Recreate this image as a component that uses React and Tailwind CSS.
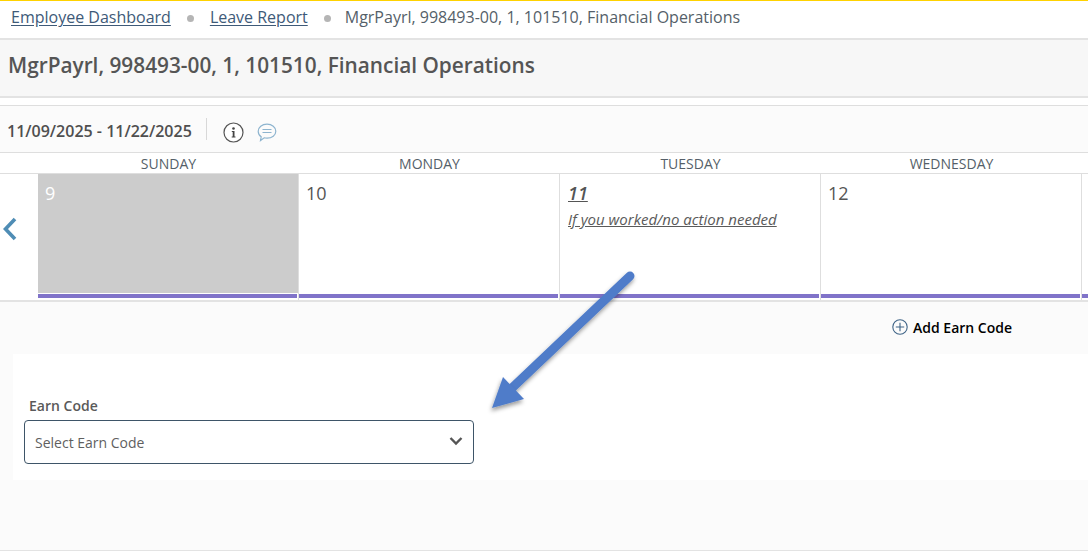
import React from "react";

function Cell({ num, gray, children, italic }) {
  return (
    <div className={`w-[261px] shrink-0 flex flex-col border-r border-[#dedede] ${gray ? "" : "bg-white"}`}>
      <div className={`flex-1 pl-[7px] pt-[7px] ${gray ? "bg-[#cccccc] text-white" : "text-[#555555]"}`}>
        {italic ? (
          <div className="text-[18px] leading-[25px] font-semibold italic underline pl-px">{num}</div>
        ) : (
          <div className="text-[18px] leading-[25px]">{num}</div>
        )}
        {children}
      </div>
      <div className="h-px bg-white" />
      <div className="h-[4px] bg-[#8073c9] mr-px" />
      <div className="h-[2px] bg-white" />
    </div>
  );
}

export default function App() {
  return (
    <div className="relative w-[1088px] h-[557px] overflow-hidden bg-white text-[#555555]" style={{ fontFamily: '"Open Sans", sans-serif' }}>
      <div className="h-px bg-[#ffd200]" />
      <div className="h-[37px] flex items-center pl-[11px] text-[16px] text-[#4b5a69] pb-[5px]">
        <a className="underline underline-offset-2 text-[#3e5a78]">Employee Dashboard</a>
        <span className="w-[7px] h-[7px] rounded-full bg-[#b5b5b5] ml-4 mr-[16px] mt-[2px]" />
        <a className="underline underline-offset-2 text-[#3e5a78]">Leave Report</a>
        <span className="w-[7px] h-[7px] rounded-full bg-[#b5b5b5] ml-4 mr-[14px] mt-[2px]" />
        <span className="text-[#555f69]">MgrPayrl, 998493-00, 1, 101510, Financial Operations</span>
      </div>
      <div className="h-[60px] bg-[#f7f7f7] border-y-2 border-[#e3e3e3] flex items-center pl-[8px] pb-[5px] text-[20.8px] font-semibold text-[#555555]">
        MgrPayrl, 998493-00, 1, 101510, Financial Operations
      </div>
      <div className="h-[7px]" />
      <div className="h-[48px] bg-[#fbfbfb] border-y border-[#dedede] flex items-center pl-[7px]">
        <span className="text-[16px] font-semibold text-[#4f4f4f] leading-none mt-[4px]">11/09/2025 - 11/22/2025</span>
        <span className="w-px h-[22px] bg-[#d8d8d8] ml-[14px] mr-[16px]" />
        <svg width="21" height="21" viewBox="0 0 21 21" className="mt-[6px]">
          <circle cx="10.5" cy="10.5" r="9.5" fill="white" stroke="#555" strokeWidth="1.2" />
          <circle cx="10.5" cy="6.5" r="1.3" fill="#444" />
          <path d="M8.8 9h2.7v5.500h1v1H8.700v-1h1V10H8.800z" fill="#444" />
        </svg>
        <svg width="20" height="19" viewBox="0 0 20 19" className="ml-[13px] mt-[6px]">
          <path d="M10 1.200c5 0 8.800 3 8.800 7s-3.800 7-8.800 7c-1 0-1.900-.1-2.800-.4L3.500 17.500l.7-3.700C2.300 12.500 1.200 10.500 1.200 8.200c0-4 3.800-7 8.800-7z" fill="none" stroke="#8db4cf" strokeWidth="1.200" />
          <path d="M5.500 6.500h9M5.500 9.500h9" stroke="#8db4cf" strokeWidth="1.200" />
        </svg>
      </div>
      <div className="h-[21px] flex pl-[38px] border-b border-[#dedede] text-[14px] text-[#555f69] leading-[21px]">
        {["SUNDAY", "MONDAY", "TUESDAY", "WEDNESDAY"].map((d) => (
          <div key={d} className="w-[261px] shrink-0 text-center">{d}</div>
        ))}
      </div>
      <div className="h-[126px] flex">
        <div className="w-[38px] shrink-0 flex items-center justify-start pl-[2px] pb-[16px]">
          <svg width="16" height="24" viewBox="0 0 16 24">
            <path d="M13 2 L3.500 12 L13 22" fill="none" stroke="#4f8db5" strokeWidth="3.600" />
          </svg>
        </div>
        <Cell num="9" gray />
        <Cell num="10" />
        <Cell num="11" italic>
          <div className="text-[15px] italic underline mt-[3px] leading-[20px] pl-px text-[#5a5a5a]">If you worked/no action needed</div>
        </Cell>
        <Cell num="12" />
        <div className="flex-1 flex flex-col justify-end"><div className="h-[4px] bg-[#8073c9] mb-[2px]" /></div>
      </div>
      <div className="h-[251px] bg-[#fbfbfb] border-t-2 border-b border-[#e3e3e3] pt-[8px] flex flex-col">
        <div className="h-[34px] mb-[10px] flex items-center pl-[892px]">
          <svg width="16" height="16" viewBox="0 0 16 16">
            <circle cx="8" cy="8" r="7.200" fill="none" stroke="#3f6487" strokeWidth="1.100" />
            <path d="M8 3.800v8.400M3.800 8h8.400" stroke="#3f6487" strokeWidth="1.100" />
          </svg>
          <span className="ml-[5px] text-[14px] font-semibold text-black whitespace-nowrap">Add Earn Code</span>
        </div>
        <div className="ml-[13px] h-[126px] bg-white pt-[42px] pl-[11px]">
          <div className="text-[14px] font-semibold text-[#5a5a5a] leading-[20px] pl-[5px]">Earn Code</div>
          <div className="w-[450px] h-[44px] mt-[4px] border border-[#3e5568] rounded-[4px] bg-white flex items-center justify-between pl-[10px] pr-[10px]">
            <span className="text-[14px] text-[#5f5f5f]">Select Earn Code</span>
            <svg width="14" height="10" viewBox="0 0 14 10" className="mb-[3px]">
              <path d="M1.500 2 L7 7.500 L12.500 2" fill="none" stroke="#555" strokeWidth="2.400" />
            </svg>
          </div>
        </div>
      </div>
      <svg className="absolute left-0 top-0 pointer-events-none" width="1088" height="557" viewBox="0 0 1088 557">
        <defs>
          <filter id="s" x="-20%" y="-20%" width="140%" height="140%">
            <feDropShadow dx="-1" dy="3" stdDeviation="2" floodColor="#000" floodOpacity="0.4" />
          </filter>
        </defs>
        <path d="M630 276 L512 388" stroke="#4f7cc9" strokeWidth="9" strokeLinecap="round" filter="url(#s)" />
        <path d="M492 408 L503 377 L524 399 Z" fill="#4f7cc9" filter="url(#s)" />
      </svg>
    </div>
  );
}
